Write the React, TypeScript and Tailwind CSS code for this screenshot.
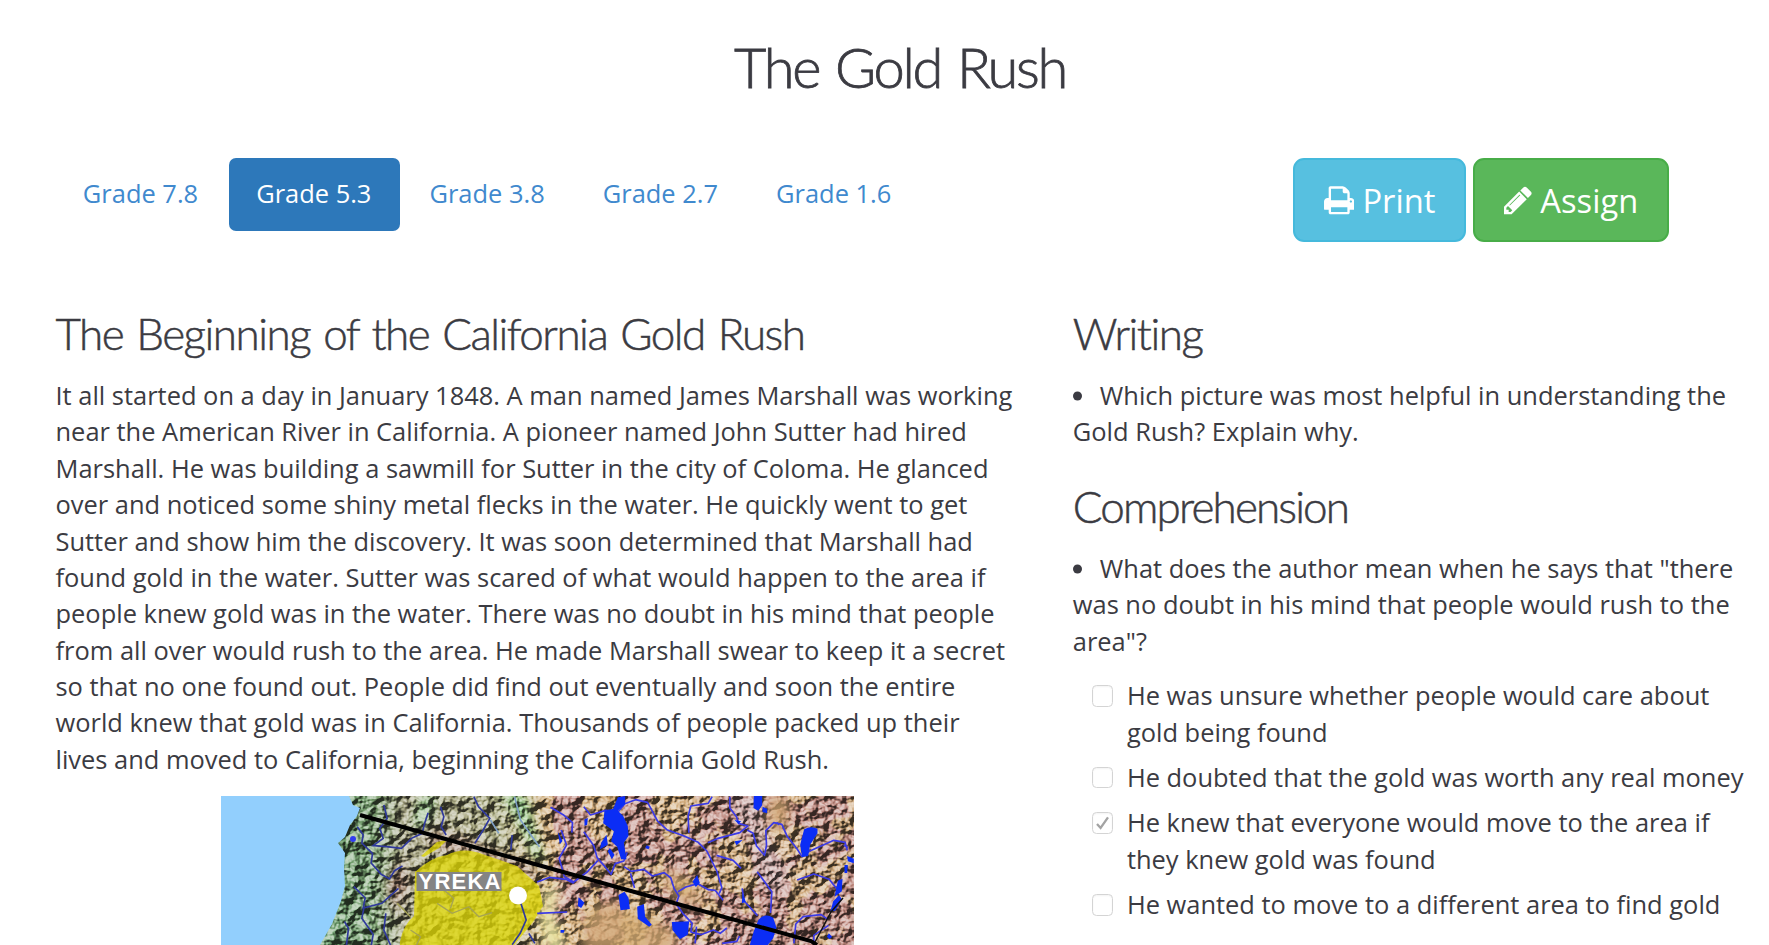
import React from "react";

const grades = ["Grade 7.8", "Grade 5.3", "Grade 3.8", "Grade 2.7", "Grade 1.6"];

const story = [
  "It all started on a day in January 1848. A man named James Marshall was working",
  "near the American River in California. A pioneer named John Sutter had hired",
  "Marshall. He was building a sawmill for Sutter in the city of Coloma. He glanced",
  "over and noticed some shiny metal flecks in the water. He quickly went to get",
  "Sutter and show him the discovery. It was soon determined that Marshall had",
  "found gold in the water. Sutter was scared of what would happen to the area if",
  "people knew gold was in the water. There was no doubt in his mind that people",
  "from all over would rush to the area. He made Marshall swear to keep it a secret",
  "so that no one found out. People did find out eventually and soon the entire",
  "world knew that gold was in California. Thousands of people packed up their",
  "lives and moved to California, beginning the California Gold Rush.",
];

const answers = [
  { lines: ["He was unsure whether people would care about", "gold being found"], checked: false },
  { lines: ["He doubted that the gold was worth any real money"], checked: false },
  { lines: ["He knew that everyone would move to the area if", "they knew gold was found"], checked: true },
  { lines: ["He wanted to move to a different area to find gold"], checked: false },
];

function Lines({ lines }: { lines: string[] }) {
  return (
    <>
      {lines.map((line) => (
        <span key={line} className="block whitespace-nowrap">
          {line}
        </span>
      ))}
    </>
  );
}

function PrintIcon() {
  return (
    <svg viewBox="0 0 1664 1792" className="h-[32.7px] w-[30.4px] shrink-0 fill-current">
      <path d="M384 1536h896v-256h-896v256zM384 896h896v-384h-160q-40 0-68-28t-28-68v-160h-640v640zM1536 960q0-26-19-45t-45-19-45 19-19 45 19 45 45 19 45-19 19-45zM1664 960v416q0 13-9.5 22.5t-22.5 9.5h-224v160q0 40-28 68t-68 28h-960q-40 0-68-28t-28-68v-160h-224q-13 0-22.5-9.5t-9.5-22.5v-416q0-79 56.5-135.5t135.5-56.5h64v-544q0-40 28-68t68-28h672q40 0 88 20t76 48l152 152q28 28 48 76t20 88v256h64q79 0 135.5 56.5t56.5 135.5z" />
    </svg>
  );
}

function PencilIcon() {
  return (
    <svg viewBox="0 0 1536 1792" className="h-[32.7px] w-[28px] shrink-0 fill-current">
      <path d="M363 1536l91-91-235-235-91 91v107h128v128h107zM886 608q0-22-22-22-10 0-17 7l-542 542q-7 7-7 17 0 22 22 22 10 0 17-7l542-542q7-7 7-17zM832 416l416 416-832 832h-416v-416zM1515 512q0 53-37 90l-166 166-416-416 166-165q36-38 90-38 53 0 91 38l235 234q37 39 37 91z" />
    </svg>
  );
}

function GoldMap() {
  return (
    <svg viewBox="0 0 633 400" className="isolate h-[400px] w-[633px] shrink-0">
      <defs>
        <filter id="relief" x="0" y="0" width="100%" height="100%" colorInterpolationFilters="sRGB">
          <feTurbulence type="fractalNoise" baseFrequency="0.085 0.095" numOctaves="3" seed="23" />
          <feColorMatrix values="0 0 0 0 0  0 0 0 0 0  0 0 0 0 0  1.2 0 0 0 0" />
          <feDiffuseLighting surfaceScale="8" diffuseConstant="0.9" lightingColor="#fff">
            <feDistantLight azimuth="225" elevation="40" />
          </feDiffuseLighting>
        </filter>
        <filter id="patches" x="0" y="0" width="100%" height="100%" colorInterpolationFilters="sRGB">
          <feTurbulence type="fractalNoise" baseFrequency="0.03" numOctaves="4" seed="5" />
          <feColorMatrix values="0 0 0 0 0.74  0 0 0 0 0.53  0 0 0 0 0.49  14 0 0 0 -6" />
        </filter>
        <filter id="soft" x="-30%" y="-30%" width="160%" height="160%">
          <feGaussianBlur stdDeviation="6" />
        </filter>
        <linearGradient id="ground" x1="0" x2="1" y1="0" y2="0">
          <stop offset="0.15" stopColor="#6c9f70" />
          <stop offset="0.24" stopColor="#7ba271" />
          <stop offset="0.29" stopColor="#a4a180" />
          <stop offset="0.44" stopColor="#a8a97e" />
          <stop offset="0.52" stopColor="#d2ab78" />
          <stop offset="1" stopColor="#cda679" />
        </linearGradient>
        <clipPath id="land">
          <path d="M128 0l4 9 7 3-3 8-7 9-5 12-7 6 7 10-1 15 1 18-4 15-9 23-12 21-8 30v260h560V0z" />
        </clipPath>
        <clipPath id="basin">
          <path d="M330 0h303v400H325V100l10-40z" />
        </clipPath>
      </defs>

      <rect width="633" height="400" fill="#92cffd" />
      <g clipPath="url(#land)">
        <rect width="633" height="400" fill="url(#ground)" />
        <path d="M200 0l16 0-10 28-14 6z" fill="#86bd80" filter="url(#soft)" />
        <path d="M280-5l25 5 10 40 10 28-10-3-18-40z" fill="#8ccb88" filter="url(#soft)" />
        <path d="M205 34l34 6 60 24 22 18-20 4-40-24-50-10zM180 60l-14 30 8 30 14-30z" fill="#a07e6c" filter="url(#soft)" />
        <g clipPath="url(#basin)">
          <rect width="633" height="400" filter="url(#patches)" />
          <path d="M505 0h35l8 40 20 40-10 20-20-20-8-40z" fill="#c5a3a0" filter="url(#soft)" />
        </g>
        <rect width="633" height="400" filter="url(#relief)" className="mix-blend-hard-light" opacity="0.72" />
        <path d="M362 118q20-14 36-12l18 12 42 16-6 24H362zM548 0h20v24l-8 16-14-14zM440 70l24 10 20 24-10 8-24-12z" fill="#d4ab72" opacity="0.75" filter="url(#soft)" />
        <path d="M325 92l14-4-6 30 14 40h-20l-8-34z" fill="#ebe9a0" opacity="0.9" filter="url(#soft)" />
        <path
          d="M200 60l16-14 10-2-8 8-15 9zM194 76q16-15 32-17 17-9 38 0l32 11 22 20 4 20-10 16-18 22-6 40H178l1-42q3-17 14-26z"
          fill="#dfd704"
          opacity="0.76"
        />

        {/* Coastal and valley rivers */}
        <g transform="translate(-10.5 -16) scale(.33333)" fill="none" stroke="#2f399c" strokeWidth="5">
          <path d="M440 140l18 24-4 25 32 32-4 28 30 34 25 14 15-25 24-14" />
          <path d="M520 75l10 40-22 30 10 30-30 22 40 3 45 5 30-30 32-15 8-32 10-30" />
          <path d="M430 320l34 34-6 30 56-14 50-45M460 385l-6 30 34 48-6 35M408 495l6-50-12-20M526 400l-6 50 20 45" />
          <path d="M690 80l10 30-8 30 15 25M790 50l14 30 34 35-20 35-25 40M905 165l-4 45" />
          <path d="M912 50l18 70 35 50 22 30M840 120l25 40" stroke="#7f9fc4" />
          <path d="M600 450l30 20-12 25M680 370l45 30 50-20 30 30 40-12M700 330l30 25-10 30M560 370l40 40" stroke="#a5a353" strokeWidth="4" />
          <path d="M925 350l22 70-18 40-24 34M955 460l18 30" />
        </g>
        <circle cx="132" cy="43" r="3" fill="#303cf0" />

        {/* Eastern lakes and streams */}
        <g transform="translate(309.5 -16) scale(.33333)">
          <g fill="none" stroke="#3a3ae6" strokeWidth="5" strokeLinejoin="round">
            <path d="M60 82l38 22 28 24-2 30M92 150l16 45-22 40 16 55 28 16 40-30 32-34M160 80l20 25 45-14 38 4 20-24 32-12 36 8 12 22 18 34 28 26 50 18 44 20 26 26 30 60 15 50-8 18" />
            <path d="M160 155l30 42 10 36 26 30 16 20 12-32 26-8 10-26M280 260l22 14 38-6 26 20 35-10 20 16 10 32 14 22-8 24 20 28 28 30-4 26 30 8 38-14 20 10 20-16M498 440l-4 50M442 335l24-14 36-10 32 18 20 2 24 30" />
            <path d="M545 50l-12 20-52 8-8 30 2 50M598 50v34l20 26 6 20 28 8-24 20-68 18-28 12M558 226l50 15 24 24M650 150l18 10 10 38 24 28 6-30-2-44 24-24 24 5 16 36 30 38 14 22 24-16 72-32 34 6 6 24M745 135l-6-8M635 325l6 38 40 44M680 275l44 60-4 64M300 280l12 44" />
            <path d="M800 300l50-18 46 16 24 30M790 490l6-58 22-22 54-6 20 14M850 490v-24l44-30M575 490l44-6 8-16M20 400l90-4M20 306l38-14 48 6 24 12M940 195l12 8" />
          </g>
          <g fill="#0b2df5">
            <path d="M222 92l26-6 14-34 22-4v24l-22 20 16 16 14 30 2 30-14 20 8 50-16 0-12-38-18-16 8-30-32-24zM228 164l-16 24-4 20 24-14zM232 214l6-10 14 20-8 14z" />
            <path d="M670 48h25v28l-12 16-14-8zM815 232l-6-38 12-46q20-12 40-2l0 14-22 34-6 34zM658 495l12-42 14-34q20-22 44-6l10 30-10 32-16 20zM264 345l18-10 12 18 4 34-28 4zM144 352l18 16-10 16-10-6zM320 380l20-8 4 38 20 24-8 6-34-24zM424 426l52-2-4 40-24 14-22-28zM500 285l8 24-12 12-10-16z" />
            <path d="M942 255h10l-2 24h-8zM950 228l20 8v14l-18-6zM922 302l14-6-2 38-22 16zM926 346l8 12-20 34-14 2 8-30zM636 340l10 26-12 4zM696 80l14 6v14l-14-4zM162 118l10-4-2 20-8 4zM82 155l14 28-8 10zM348 196l10 4-4 8-10-4zM895 460l10 10-8 8-8-8zM90 450l12 0-2 8-10 0zM612 120l20 4-8 8zM612 184l24-4-18 16z" />
          </g>
        </g>
      </g>

      <path d="M139 19l171 48 150 42 130 36 6 4" fill="none" stroke="#000" strokeWidth="4" />
      <path d="M594 146l16-30 12-14" fill="none" stroke="#111" strokeWidth="1.500" />
      <rect x="195.500" y="76" width="85" height="19" fill="#848484" />
      <text x="197.500" y="93" textLength="82" className="fill-white font-['Liberation_Sans',sans-serif] text-[22px] font-bold">
        YREKA
      </text>
      <circle cx="297" cy="99.500" r="9" fill="#fff" />
    </svg>
  );
}

function Checkbox({ checked }: { checked: boolean }) {
  return (
    <span className="mt-[8px] flex size-[21.500px] shrink-0 items-center justify-center rounded-[4.500px] border border-[#d4d4d4] bg-white shadow-[inset_0_1px_2px_#0000000d]">
      {checked && (
        <svg viewBox="0 0 13 14" className="h-[14px] w-[13px]" fill="none" stroke="#a3a3a3" strokeWidth="2.300">
          <path d="M1 8l3.600 4L12 1.300" />
        </svg>
      )}
    </span>
  );
}

function Bullet() {
  return <span className="mr-[17.500px] inline-block size-[9.500px] -translate-y-[4.500px] rounded-full bg-[#3b3b42]" />;
}

export default function App() {
  return (
    <main className="flex h-[945px] w-[1769px] flex-col overflow-hidden bg-white pl-[55.500px] font-['Open_Sans',sans-serif] text-[25.450px] leading-[36.370px] text-[#3b3b42]">
      <h1 className="flex h-[158px] w-[1689px] shrink-0 justify-center pt-[31px] font-['Lato',sans-serif] text-[56px] leading-[72px] font-light tracking-[-2.300px] [word-spacing:3px] [-webkit-text-stroke:0.8px_#3b3b42]">
        <span>The Gold Rush</span>
      </h1>

      <div className="flex h-[152px] w-[1613.500px] shrink-0 items-start justify-between">
        <nav className="flex gap-[2.300px]">
          {grades.map((grade, i) => (
            <a
              key={grade}
              className={
                i === 1
                  ? "flex h-[72.500px] w-[171px] items-center justify-center rounded-[7px] bg-[#2d78ba] pr-[1px] pb-[2px] text-white"
                  : "flex h-[72.500px] w-[171px] items-center justify-center pr-[1px] pb-[2px] text-[#4089ce]"
              }
            >
              {grade}
            </a>
          ))}
        </nav>
        <div className="flex gap-[7px] text-[32.700px] text-white">
          <button className="flex h-[84px] w-[173px] items-center justify-center gap-[8.500px] rounded-[11px] border-2 border-[#45b9dc] bg-[#57c0e0] pt-[1px]">
            <PrintIcon />
            <span className="pt-[1px]">Print</span>
          </button>
          <button className="flex h-[84px] w-[196px] items-center justify-center gap-[8.500px] rounded-[11px] border-2 border-[#48ad48] bg-[#5ab75a] pt-[1px]">
            <PencilIcon />
            <span className="pt-[1px]">Assign</span>
          </button>
        </div>
      </div>

      <div className="flex gap-[54.300px]">
        <article className="flex w-[963px] shrink-0 flex-col">
          <h2 className="h-[67px] font-['Lato',sans-serif] text-[44px] leading-[47px] font-light tracking-[-1.500px] whitespace-nowrap [word-spacing:2.500px] [-webkit-text-stroke:0.5px_#3b3b42]">
            The Beginning of the California Gold Rush
          </h2>
          <p>
            <Lines lines={story} />
          </p>
          <div className="mt-[19px] flex justify-center">
            <GoldMap />
          </div>
        </article>

        <aside className="flex flex-col">
          <h2 className="h-[67px] font-['Lato',sans-serif] text-[44px] leading-[47px] font-light tracking-[-1.450px] [-webkit-text-stroke:0.5px_#3b3b42]">
            Writing
          </h2>
          <p className="h-[106px] whitespace-nowrap">
            <Bullet />
            Which picture was most helpful in understanding the
            <br />
            Gold Rush? Explain why.
          </p>
          <h2 className="h-[67px] font-['Lato',sans-serif] text-[44px] leading-[46px] font-light tracking-[-1.850px] [-webkit-text-stroke:0.5px_#3b3b42]">
            Comprehension
          </h2>
          <p className="whitespace-nowrap">
            <Bullet />
            What does the author mean when he says that "there
            <br />
            was no doubt in his mind that people would rush to the
            <br />
            area"?
          </p>
          <ul className="mt-[18px] flex flex-col gap-[9.100px] pl-[19px]">
            {answers.map((answer) => (
              <li key={answer.lines[0]} className="flex gap-[13.600px]">
                <Checkbox checked={answer.checked} />
                <div>
                  <Lines lines={answer.lines} />
                </div>
              </li>
            ))}
          </ul>
        </aside>
      </div>
    </main>
  );
}
